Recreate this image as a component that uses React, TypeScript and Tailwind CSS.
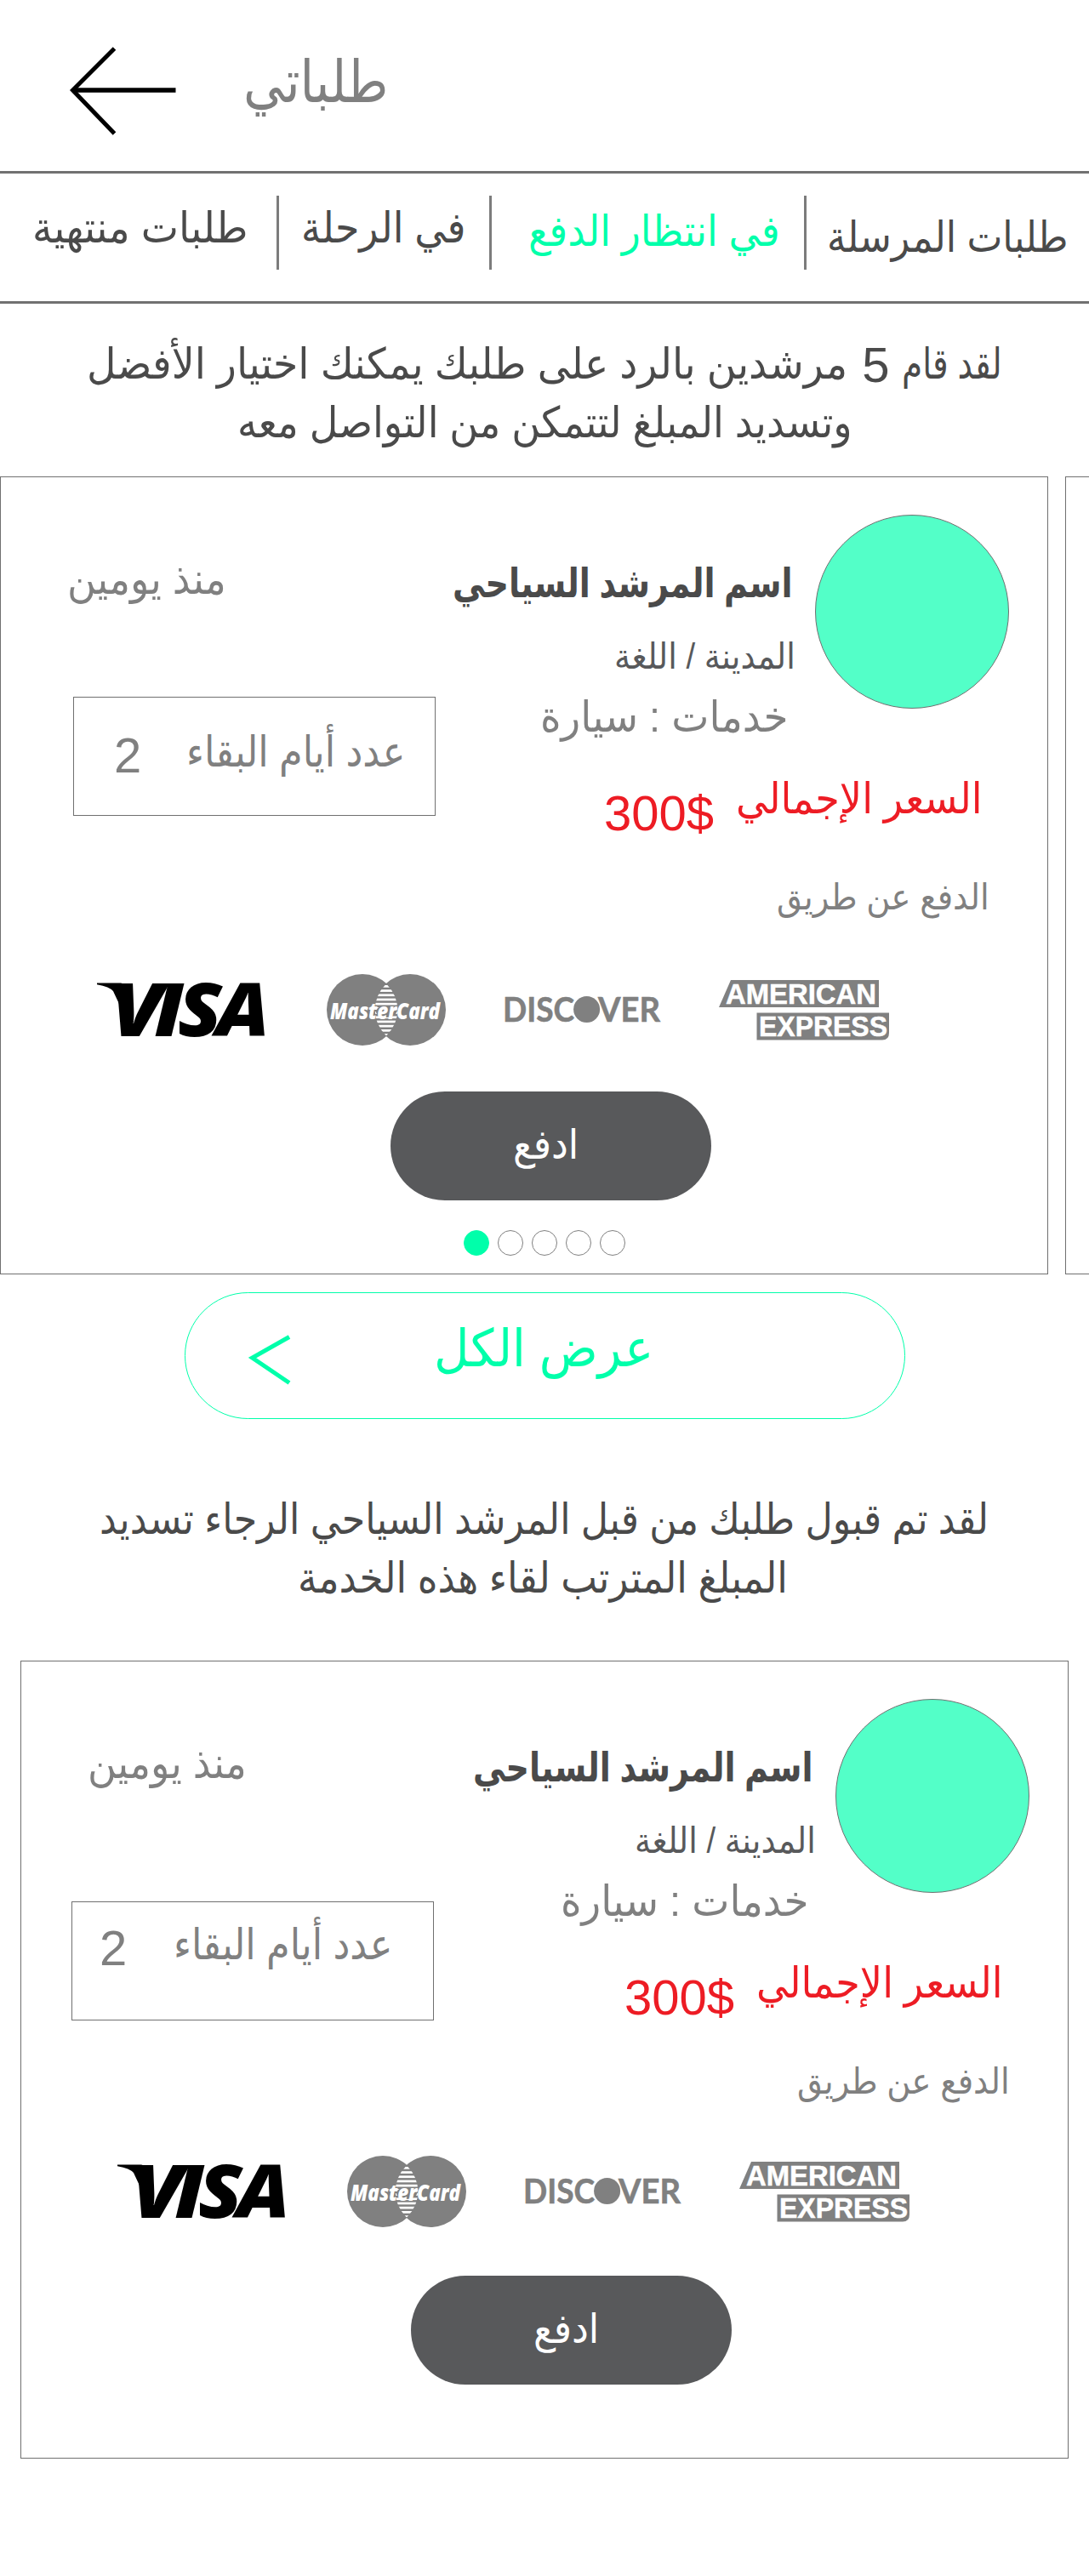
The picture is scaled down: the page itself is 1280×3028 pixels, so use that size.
import { useLayoutEffect, useRef, type ReactNode } from "react";

/* Right-to-left label squeezed or stretched horizontally to fill its box. */
function Label({ className, children }: { className: string; children: ReactNode }) {
  const box = useRef<HTMLDivElement>(null);
  const text = useRef<HTMLSpanElement>(null);
  useLayoutEffect(() => {
    const b = box.current;
    const t = text.current;
    if (b && t && t.offsetWidth > 0) {
      t.style.transform = `translateY(0.045em) scaleX(${b.clientWidth / t.offsetWidth})`;
    }
  });
  return (
    <div ref={box} dir="rtl" className={`shrink-0 whitespace-nowrap ${className}`}>
      <span ref={text} className="inline-block origin-right align-top">
        {children}
      </span>
    </div>
  );
}

function VisaLogo() {
  return (
    <svg className="mt-[9px] h-[65px] w-[200px] shrink-0 overflow-visible" viewBox="0 0 200 65">
      <path d="M0 1.5H28Q34 2 36 9L40 30L26 26L19 11Q15 6 0 3.2Z" fill="#000" />
      <g fontFamily="Open Sans" fontWeight="800" fontStyle="italic" fontSize="87" fill="#000">
        <text x="16" y="63.6" textLength="62" lengthAdjust="spacingAndGlyphs">V</text>
        <text x="67" y="63.6" textLength="35" lengthAdjust="spacingAndGlyphs">I</text>
        <text x="95" y="63.6" textLength="52" lengthAdjust="spacingAndGlyphs">S</text>
        <text x="140" y="63.6" textLength="63" lengthAdjust="spacingAndGlyphs">A</text>
      </g>
    </svg>
  );
}

function MasterCardLogo() {
  return (
    <svg className="ml-[70px] h-[84px] w-[140px] shrink-0 overflow-visible" viewBox="0 0 140 84">
      <defs>
        <clipPath id="mcLeft">
          <circle cx="42" cy="42" r="41.3" />
        </clipPath>
        <clipPath id="mcRight">
          <circle cx="98" cy="42" r="41.3" />
        </clipPath>
      </defs>
      <circle cx="42" cy="42" r="42" fill="#808080" />
      <circle cx="98" cy="42" r="42" fill="#808080" />
      <g clipPath="url(#mcLeft)">
        <g clipPath="url(#mcRight)">
          {[13, 18.2, 23.4, 28.6, 33.8, 39, 44.2, 49.4, 54.6, 59.8, 65, 70.2].map((y) => (
            <rect key={y} x="55" y={y} width="30" height="2.7" fill="#fff" />
          ))}
        </g>
      </g>
      <ellipse cx="70" cy="44" rx="12" ry="7" fill="#808080" />
      <text
        x="4"
        y="53"
        textLength="129"
        lengthAdjust="spacingAndGlyphs"
        fontFamily="Open Sans"
        fontWeight="800"
        fontStyle="italic"
        fontSize="26.5"
        fill="#fff"
      >
        MasterCard
      </text>
    </svg>
  );
}

function DiscoverLogo() {
  return (
    <svg className="mt-[26px] ml-[70px] h-[31px] w-[181px] shrink-0 overflow-visible" viewBox="0 0 181 31">
      <g fontFamily="Lato" fontWeight="700" fontSize="40.5" fill="#808080" stroke="#808080" strokeWidth="0.6">
        <text x="-3" y="30" textLength="84" lengthAdjust="spacingAndGlyphs">DISC</text>
        <text x="109" y="30" textLength="73" lengthAdjust="spacingAndGlyphs">VER</text>
      </g>
      <circle cx="95.6" cy="15.5" r="15.5" fill="#808080" />
    </svg>
  );
}

function AmexLogo() {
  return (
    <svg className="mt-[7px] ml-[70px] h-[71px] w-[202px] shrink-0 overflow-visible" viewBox="0 0 202 71">
      <path d="M14 0H188V32H0Z" fill="#808080" />
      <path d="M44.500 38.500H200V62Q200 70.500 192 70.500H44.500Z" fill="#808080" />
      <g fontFamily="Liberation Sans" fontWeight="700" fontSize="33" fill="#fff" stroke="#fff" strokeWidth="0.5">
        <text x="8" y="27.7" textLength="177" lengthAdjust="spacingAndGlyphs">AMERICAN</text>
        <text x="47" y="65.7" textLength="151" lengthAdjust="spacingAndGlyphs">EXPRESS</text>
      </g>
    </svg>
  );
}

const dots = [true, false, false, false, false];

function GuideCard({ first }: { first?: boolean }) {
  return (
    <article className="flex h-[938px] w-[1232px] shrink-0 flex-col border border-[#707070] bg-white">
      <div className="flex h-[517px] shrink-0">
        <div className="flex w-[531px] shrink-0 flex-col">
          <Label className="mt-[88px] ml-[78px] h-[60px] w-[187px] text-[50px] leading-[60px] text-[#808080]">
            منذ يومين
          </Label>
          {first ? (
            <div className="mt-[110px] ml-[85px] flex h-[140px] w-[426px] items-start border border-[#707070] text-[#808080]">
              <span className="mt-[38px] ml-[47px] w-[32px] text-[58px] leading-[60px]">2</span>
              <Label className="mt-[32px] ml-[53px] w-[257px] text-[50px] leading-[60px]">عدد أيام البقاء</Label>
            </div>
          ) : (
            <div className="mt-[134px] ml-[59px] flex h-[140px] w-[426px] items-start border border-[#707070] text-[#808080]">
              <span className="mt-[24px] ml-[32px] w-[32px] text-[58px] leading-[60px]">2</span>
              <Label className="mt-[18px] ml-[55px] w-[257px] text-[50px] leading-[60px]">عدد أيام البقاء</Label>
            </div>
          )}
        </div>

        <div className="flex flex-col">
          <div className="flex h-[310px] items-start">
            <div className="flex w-[400px] flex-col items-end">
              <Label className="mt-[93px] h-[60px] w-[400px] text-[48px] leading-[60px] font-bold text-[#4a4a4a]">
                اسم المرشد السياحي
              </Label>
              <Label className="-mr-[3px] mt-[31px] h-[50px] w-[213px] text-[42px] leading-[50px] text-[#58595b]">
                المدينة / اللغة
              </Label>
              <Label className="mt-4 mr-[6px] h-[60px] w-[291px] text-[50px] leading-[60px] text-[#808080]">
                خدمات : سيارة
              </Label>
            </div>
            <div className="mt-[44px] ml-[26px] size-[228px] shrink-0 rounded-full border border-[#707070] bg-[#53ffc8]" />
          </div>
          <div className="flex h-[115px] items-start text-[#ed1c24]">
            <span className="mt-[55px] ml-[178px] w-[130px] text-[58px] leading-[60px]">300$</span>
            <Label className="mt-[36px] ml-[25px] w-[290px] text-[50px] leading-[60px]">السعر الإجمالي</Label>
          </div>
          <Label className="mt-[42px] ml-[381px] h-[50px] w-[250px] text-[42px] leading-[50px] text-[#808080]">
            الدفع عن طريق
          </Label>
        </div>
      </div>

      <div className={`ml-[113px] flex h-[84px] shrink-0 items-start ${first ? "mt-[67px]" : "mt-16"}`}>
        <VisaLogo />
        <MasterCardLogo />
        <DiscoverLogo />
        <AmexLogo />
      </div>

      <button
        className={`ml-[458px] flex h-[128px] w-[377px] shrink-0 items-start rounded-full bg-[#58595b] text-white ${
          first ? "mt-[54px]" : "mt-[57px]"
        }`}
      >
        <Label className="mt-[31px] ml-[144px] w-[77px] text-[48px] leading-[60px]">ادفع</Label>
      </button>

      {first && (
        <div className="mt-[35px] ml-[544px] flex gap-[10px]">
          {dots.map((active, i) => (
            <span
              key={i}
              className={`size-[30px] rounded-full border ${
                active ? "border-[#00ffaa] bg-[#00ffaa]" : "border-[#808080]"
              }`}
            />
          ))}
        </div>
      )}
    </article>
  );
}

function Divider({ className }: { className: string }) {
  return <span className={`mt-[26px] h-[87px] w-[3px] shrink-0 bg-[#7c7c7c] ${className}`} />;
}

export default function App() {
  return (
    <main className="h-[3028px] w-[1280px] overflow-hidden bg-white font-['Liberation_Sans','DejaVu_Sans',sans-serif] text-[#4a4a4a]">
      <header className="flex h-[201px] items-start">
        <svg className="mt-[54px] ml-[82px] h-[106px] w-[126px]" viewBox="0 0 126 106" fill="none" stroke="#000">
          <path d="M52.500 3L3.500 52L52.500 103" strokeWidth="5" />
          <path d="M3 52H124.500" strokeWidth="5.500" />
        </svg>
        <Label className="mt-[54px] ml-[78px] w-[170px] text-[69px] leading-[80px] text-[#808080]">طلباتي</Label>
      </header>

      <nav className="flex h-[156px] items-start border-y-[3px] border-[#717171]">
        <Label className="mt-[32px] ml-[38px] w-[254px] text-[50px] leading-[60px]">طلبات منتهية</Label>
        <Divider className="ml-[33px]" />
        <Label className="mt-[32px] ml-[26px] w-[193px] text-[50px] leading-[60px]">في الرحلة</Label>
        <Divider className="ml-[28px]" />
        <Label className="mt-[36px] ml-[43px] w-[296px] text-[50px] leading-[60px] text-[#00ffaa]">
          في انتظار الدفع
        </Label>
        <Divider className="ml-[28px]" />
        <Label className="mt-[43px] ml-[24px] w-[284px] text-[50px] leading-[60px]">طلبات المرسلة</Label>
      </nav>

      <section className="flex flex-col items-center pt-[35px] text-[50px] leading-[69px]">
        <p dir="rtl" className="flex h-[69px] w-[1075px]">
          <Label className="w-[118px]">لقد قام</Label>
          <span className="mr-[14px] w-[32px] shrink-0 pt-[2px] text-[58px]">5</span>
          <Label className="mr-[17px] w-[894px]">مرشدين بالرد على طلبك يمكنك اختيار الأفضل</Label>
        </p>
        <Label className="h-[69px] w-[723px]">وتسديد المبلغ لتتمكن من التواصل معه</Label>
      </section>

      <section className="mt-[30px] flex gap-5 overflow-hidden">
        <GuideCard first />
        <div className="h-[938px] w-[1232px] shrink-0 border border-[#707070]" />
      </section>

      <button className="mt-[21px] ml-[217px] flex h-[149px] w-[847px] items-start rounded-full border border-[#00ffaa] text-[#00ffaa]">
        <svg className="mt-[49px] ml-[74px] h-[60px] w-[50px]" viewBox="0 0 50 60" fill="none" stroke="#00ffaa" strokeWidth="5">
          <path d="M48 2.500L4.500 27L48 56.500" />
        </svg>
        <Label className="mt-[27px] ml-[168px] w-[258px] text-[61px] leading-[70px]">عرض الكل</Label>
      </button>

      <section className="mt-[82px] flex flex-col items-center text-[50px] leading-[69px]">
        <Label className="h-[69px] w-[1045px]">لقد تم قبول طلبك من قبل المرشد السياحي الرجاء تسديد</Label>
        <Label className="mr-1 h-[69px] w-[576px]">المبلغ المترتب لقاء هذه الخدمة</Label>
      </section>

      <section className="mt-16 ml-6">
        <GuideCard />
      </section>
    </main>
  );
}
